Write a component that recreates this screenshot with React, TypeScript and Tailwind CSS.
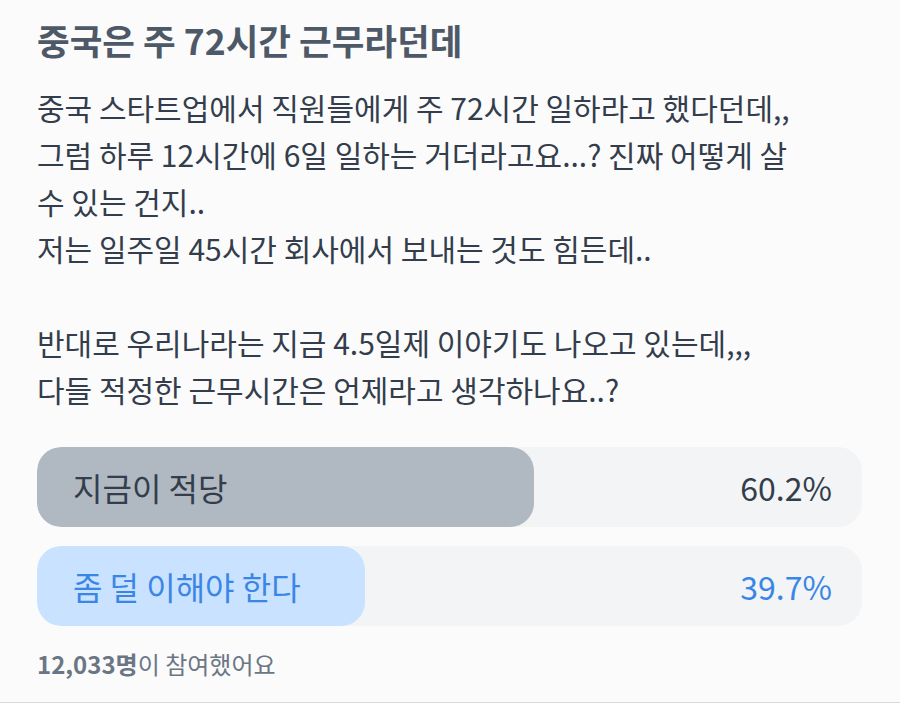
import React from 'react';

const font = { fontFamily: '"Noto Sans CJK KR", "Noto Sans", sans-serif' };

type Option = { label: string; pct: number; selected?: boolean };

const options: Option[] = [
  { label: '지금이 적당', pct: 60.2 },
  { label: '좀 덜 이해야 한다', pct: 39.7, selected: true },
];

function PollBar({ opt }: { opt: Option }) {
  return (
    <div className="relative h-[80px] w-full overflow-hidden rounded-[24px] bg-[#f2f4f6]">
      <div
        className={opt.selected ? 'absolute inset-y-0 left-0 rounded-[24px] bg-[#c9e2ff]' : 'absolute inset-y-0 left-0 rounded-[24px] bg-[#b0b8c1]'}
        style={{ width: `${opt.pct}%` }}
      />
      <div className="relative flex h-full items-center justify-between pl-[36px] pr-[30px] text-[32px]">
        <span className={opt.selected ? 'text-[#3a86e6]' : 'text-[#333d4b]'}>{opt.label}</span>
        <span className={opt.selected ? 'text-[#3a86e6]' : 'text-[#333d4b]'}>{opt.pct}%</span>
      </div>
    </div>
  );
}

export default function App() {
  return (
    <div className="h-[703px] w-[900px] overflow-hidden bg-[#fbfbfc] border-b border-[#d9d9d9]" style={font}>
      <div className="px-[37px] pt-[14px]">
        <h1 className="text-[35.5px] font-bold leading-[52px] text-[#4e5968]">중국은 주 72시간 근무라던데</h1>
        <div className="mt-[18px] text-[30px] leading-[47px] text-[#333d4b]">
          <p>중국 스타트업에서 직원들에게 주 72시간 일하라고 했다던데,,</p>
          <p>그럼 하루 12시간에 6일 일하는 거더라고요...? 진짜 어떻게 살</p>
          <p>수 있는 건지..</p>
          <p>저는 일주일 45시간 회사에서 보내는 것도 힘든데..</p>
          <p>&nbsp;</p>
          <p>반대로 우리나라는 지금 4.5일제 이야기도 나오고 있는데,,,</p>
          <p>다들 적정한 근무시간은 언제라고 생각하나요..?</p>
        </div>
        <div className="mt-[34px] flex w-[825px] flex-col gap-[19px]">
          {options.map((o) => (
            <PollBar key={o.label} opt={o} />
          ))}
        </div>
        <p className="mt-[20px] text-[24px] leading-[36px] text-[#6b7684]">
          <span className="font-bold">12,033명</span>이 참여했어요
        </p>
      </div>
    </div>
  );
}
